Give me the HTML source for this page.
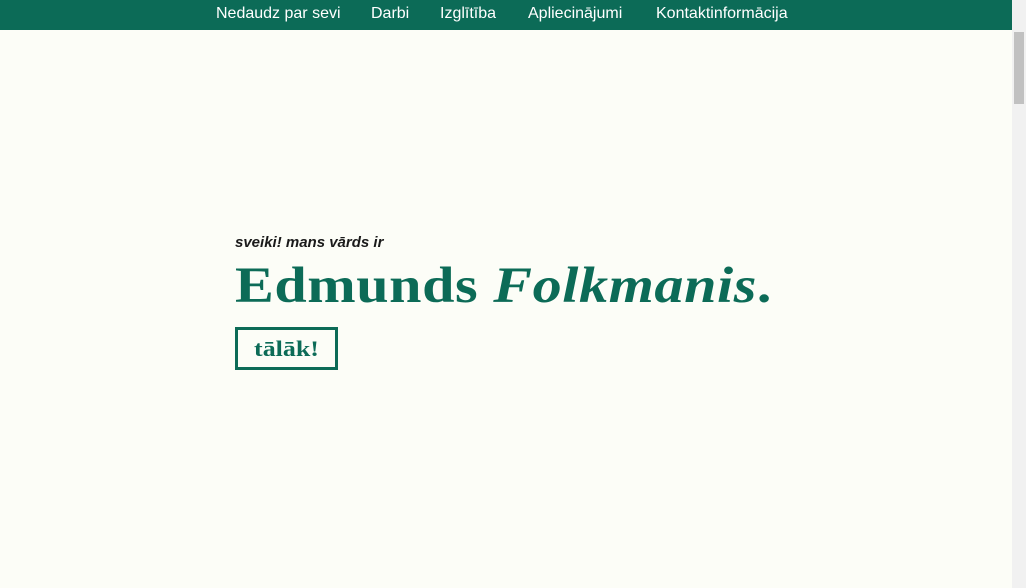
<!DOCTYPE html>
<html><head><meta charset="utf-8"><style>
html,body{margin:0;padding:0;}
body{width:1026px;height:588px;background:#fcfdf7;overflow:hidden;position:relative;font-family:"Liberation Sans",sans-serif;}
.nav{position:absolute;left:0;top:0;width:1012px;height:30px;background:#0c6b57;}
.nav span{position:absolute;top:5px;color:#fff;font-size:16px;line-height:18px;white-space:nowrap;}
.sb{position:absolute;right:0;top:0;width:14px;height:588px;background:#f1f1f1;}
.th{position:absolute;right:2px;top:32px;width:10px;height:72px;background:#c1c1c1;}
.hi{position:absolute;left:235px;top:234px;font-style:italic;font-weight:bold;font-size:15px;color:#1a1a1a;}
h1{position:absolute;left:235px;top:254px;margin:0;font-family:"Liberation Serif",serif;font-weight:bold;font-size:51px;line-height:64px;color:#0c6b57;white-space:nowrap;letter-spacing:0.5px;transform:scaleX(1.14);transform-origin:0 0;}
.btn{position:absolute;left:235px;top:327px;width:97px;height:37px;border:3px solid #0c6b57;box-sizing:content-box;font-family:"Liberation Serif",serif;font-weight:bold;font-size:22px;color:#0c6b57;text-align:center;line-height:37px;}
.btn span{display:inline-block;transform:scaleX(1.18);}
</style></head><body>
<div class="nav">
<span style="left:216px">Nedaudz par sevi</span>
<span style="left:371px">Darbi</span>
<span style="left:440px">Izglītība</span>
<span style="left:528px">Apliecinājumi</span>
<span style="left:656px">Kontaktinformācija</span>
</div>
<div class="sb"><div class="th"></div></div>
<div class="hi">sveiki! mans vārds ir</div>
<h1>Edmunds <i>Folkmanis</i>.</h1>
<div class="btn"><span>tālāk!</span></div>
</body></html>
